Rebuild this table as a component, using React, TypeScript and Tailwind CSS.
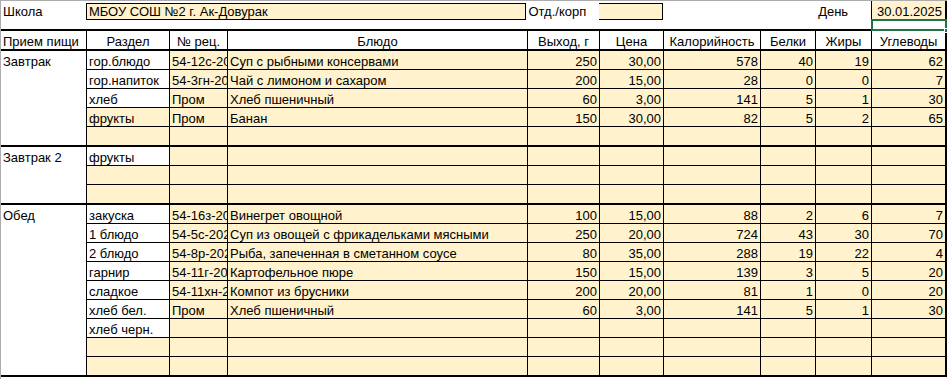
import React from 'react'

type Row = {
  razdel?: string
  rec?: string
  dish?: string
  nums?: string[]
  beigeRazdel?: boolean
}

type Group = { meal: string; rows: Row[] }

const GROUPS: Group[] = [
  {
    meal: 'Завтрак',
    rows: [
      { razdel: 'гор.блюдо', rec: '54-12с-2020', dish: 'Суп с рыбными консервами', nums: ['250', '30,00', '578', '40', '19', '62'] },
      { razdel: 'гор.напиток', rec: '54-3гн-2020', dish: 'Чай с лимоном и сахаром', nums: ['200', '15,00', '28', '0', '0', '7'] },
      { razdel: 'хлеб', rec: 'Пром', dish: 'Хлеб пшеничный', nums: ['60', '3,00', '141', '5', '1', '30'] },
      { razdel: 'фрукты', rec: 'Пром', dish: 'Банан', nums: ['150', '30,00', '82', '5', '2', '65'], beigeRazdel: true },
      { beigeRazdel: true },
    ],
  },
  {
    meal: 'Завтрак 2',
    rows: [{ razdel: 'фрукты' }, { beigeRazdel: true }, { beigeRazdel: true }],
  },
  {
    meal: 'Обед',
    rows: [
      { razdel: 'закуска', rec: '54-16з-2020', dish: 'Винегрет овощной', nums: ['100', '15,00', '88', '2', '6', '7'] },
      { razdel: '1 блюдо', rec: '54-5с-2020', dish: 'Суп из овощей с фрикадельками мясными', nums: ['250', '20,00', '724', '43', '30', '70'] },
      { razdel: '2 блюдо', rec: '54-8р-2020', dish: 'Рыба, запеченная в сметанном соусе', nums: ['80', '35,00', '288', '19', '22', '4'] },
      { razdel: 'гарнир', rec: '54-11г-2020', dish: 'Картофельное пюре', nums: ['150', '15,00', '139', '3', '5', '20'] },
      { razdel: 'сладкое', rec: '54-11хн-2020', dish: 'Компот из брусники', nums: ['200', '20,00', '81', '1', '0', '20'] },
      { razdel: 'хлеб бел.', rec: 'Пром', dish: 'Хлеб пшеничный', nums: ['60', '3,00', '141', '5', '1', '30'] },
      { razdel: 'хлеб черн.' },
      { beigeRazdel: true },
      { beigeRazdel: true },
    ],
  },
]

// widths of the numeric columns: Выход, Цена, Калорийность, Белки, Жиры, Углеводы
const NUM_W = ['w-[72px]', 'w-[64px]', 'w-[97px]', 'w-[55px]', 'w-[56px]', 'w-[74px]']
const HEAD_NUM = ['Выход, г', 'Цена', 'Калорийность', 'Белки', 'Жиры', 'Углеводы']

const beige = 'bg-[#fff2cc]'

function Cell({ w, bg, right, center, children }: { w: string; bg?: string; right?: boolean; center?: boolean; children?: React.ReactNode }) {
  return (
    <div
      className={`${w} ${bg ?? ''} shrink-0 h-full border-l border-black flex items-end overflow-hidden whitespace-nowrap leading-[15px] ${
        right ? 'justify-end pr-[2px]' : center ? 'justify-center' : 'pl-[2px]'
      }`}
    >
      {children}
    </div>
  )
}

function DataRow({ row, last }: { row: Row; last: boolean }) {
  const nums = row.nums ?? ['', '', '', '', '', '']
  return (
    <div className={`flex ${last ? 'h-[18px]' : 'h-[19px] border-b border-black'}`}>
      <Cell w="w-[83px]" bg={row.beigeRazdel ? beige : 'bg-white'}>{row.razdel}</Cell>
      <Cell w="w-[58px]" bg={beige}>{row.rec}</Cell>
      <Cell w="w-[300px]" bg={beige}>{row.dish}</Cell>
      {nums.map((n, i) => (
        <Cell key={i} w={NUM_W[i]} bg={beige} right>{n}</Cell>
      ))}
    </div>
  )
}

export default function App() {
  return (
    <div className="relative w-[947px] h-[379px] bg-white border-t border-l border-[#acacac] text-[13px] text-black font-['Liberation_Sans',Arial,sans-serif]">
      {/* sheet header */}
      <div className="flex h-[19px] leading-[15px]">
        <div className="w-[85px] pl-[2px] pt-[3px]">Школа</div>
        <div className={`w-[441px] mt-[2px] h-[17px] border border-black ${beige} pl-[2px] leading-[15px]`}>
          МБОУ СОШ №2 г. Ак-Довурак
        </div>
        <div className="w-[73px] pl-[2px] pt-[3px]">Отд./корп</div>
        <div className={`w-[64px] mt-[2px] h-[17px] border border-black border-l-0 ${beige}`} />
        <div className="w-[152px]" />
        <div className="w-[56px] pl-[3px] pt-[3px]">День</div>
        <div className={`w-[76px] h-[19px] border-l border-r-2 border-black ${beige} flex justify-end pr-[3px] pt-[3px]`}>
          30.01.2025
        </div>
      </div>
      <div className="h-[9px]" />

      {/* table */}
      <div className="border-r-2 border-black w-[946px]">
        <div className="flex h-[22px] border-y-2 border-black">
          <div className="w-[85px] shrink-0 flex items-end pl-[2px] leading-[15px] whitespace-nowrap">Прием пищи</div>
          <Cell w="w-[83px]" center>Раздел</Cell>
          <Cell w="w-[58px]" center>№ рец.</Cell>
          <Cell w="w-[300px]" center>Блюдо</Cell>
          {HEAD_NUM.map((h, i) => (
            <Cell key={h} w={NUM_W[i]} center>{h}</Cell>
          ))}
        </div>

        {GROUPS.map((g) => (
          <div key={g.meal} className="flex border-b-2 border-black">
            <div className="w-[85px] shrink-0 pl-[2px] pt-[3px] leading-[15px]">{g.meal}</div>
            <div className="flex flex-col">
              {g.rows.map((r, i) => (
                <DataRow key={i} row={r} last={i === g.rows.length - 1} />
              ))}
            </div>
          </div>
        ))}
      </div>

      {/* active cell selection */}
      <div className="absolute left-[870px] top-[18px] w-[76px] h-[12px] border-2 border-[#217346]" />
      <div className="absolute left-[943px] top-[27px] w-[5px] h-[5px] bg-[#217346] border border-white" />
    </div>
  )
}
